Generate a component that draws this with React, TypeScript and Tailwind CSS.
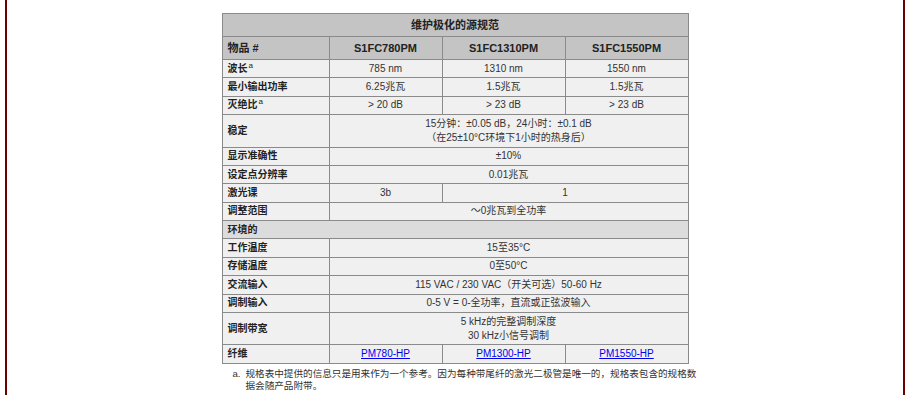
const rows: { label: string; sup?: boolean; cells: { text: string[]; span?: number }[] }[] = [
  { label: '波长', sup: true, cells: [{ text: ['785 nm'] }, { text: ['1310 nm'] }, { text: ['1550 nm'] }] },
  { label: '最小输出功率', cells: [{ text: ['6.25兆瓦'] }, { text: ['1.5兆瓦'] }, { text: ['1.5兆瓦'] }] },
  { label: '灭绝比', sup: true, cells: [{ text: ['> 20 dB'] }, { text: ['> 23 dB'] }, { text: ['> 23 dB'] }] },
  {
    label: '稳定',
    cells: [{ text: ['15分钟：±0.05 dB，24小时：±0.1 dB', '（在25±10°C环境下1小时的热身后）'], span: 3 }],
  },
  { label: '显示准确性', cells: [{ text: ['±10%'], span: 3 }] },
  { label: '设定点分辨率', cells: [{ text: ['0.01兆瓦'], span: 3 }] },
  { label: '激光课', cells: [{ text: ['3b'] }, { text: ['1'], span: 2 }] },
  { label: '调整范围', cells: [{ text: ['～0兆瓦到全功率'], span: 3 }] },
]

const envRows: { label: string; text: string[] }[] = [
  { label: '工作温度', text: ['15至35°C'] },
  { label: '存储温度', text: ['0至50°C'] },
  { label: '交流输入', text: ['115 VAC / 230 VAC（开关可选）50-60 Hz'] },
  { label: '调制输入', text: ['0-5 V = 0-全功率，直流或正弦波输入'] },
  { label: '调制带宽', text: ['5 kHz的完整调制深度', '30 kHz小信号调制'] },
]

const td = 'border border-[#8a8a8a] bg-[#f0f0f0] py-[1.7px] px-[5px] leading-[14px]'
const lbl = `${td} text-left font-bold text-[#222] text-[10px]`
const val = `${td} text-center text-[#333] text-[10px]`

export default function App() {
  return (
    <div className="ml-[5px] mr-[2px] h-[395px] border-x-2 border-[#6b0000] pt-[13px] font-['Liberation_Sans','Noto_Sans_CJK_SC',sans-serif]">
      <table className="mx-auto w-[467px] border-collapse">
        <colgroup>
          <col className="w-[107px]" />
          <col className="w-[113px]" />
          <col className="w-[123px]" />
          <col className="w-[123px]" />
        </colgroup>
        <tbody>
          <tr>
            <td colSpan={4} className="h-[23px] border border-[#8a8a8a] bg-[#c4c4c4] text-center text-[11px] font-bold text-[#222]">
              维护极化的源规范
            </td>
          </tr>
          <tr className="h-[23px] bg-[#c4c4c4] text-[11px] font-bold text-[#222]">
            <td className="border border-[#8a8a8a] px-[5px] text-left">物品 #</td>
            <td className="border border-[#8a8a8a] text-center">S1FC780PM</td>
            <td className="border border-[#8a8a8a] text-center">S1FC1310PM</td>
            <td className="border border-[#8a8a8a] text-center">S1FC1550PM</td>
          </tr>
          {rows.map((r) => (
            <tr key={r.label}>
              <td className={lbl}>
                {r.label}
                {r.sup && <sup className="ml-px text-[8px] font-normal">a</sup>}
              </td>
              {r.cells.map((c, i) => (
                <td key={i} colSpan={c.span ?? 1} className={val}>
                  {c.text.map((t) => (
                    <div key={t}>{t}</div>
                  ))}
                </td>
              ))}
            </tr>
          ))}
          <tr>
            <td colSpan={4} className="border border-[#8a8a8a] bg-[#dcdcdc] px-[5px] py-[1.7px] text-left text-[10px] leading-[14px] font-bold text-[#222]">
              环境的
            </td>
          </tr>
          {envRows.map((r) => (
            <tr key={r.label}>
              <td className={lbl}>{r.label}</td>
              <td colSpan={3} className={val}>
                {r.text.map((t) => (
                  <div key={t}>{t}</div>
                ))}
              </td>
            </tr>
          ))}
          <tr>
            <td className={lbl}>纤维</td>
            {['PM780-HP', 'PM1300-HP', 'PM1550-HP'].map((p) => (
              <td key={p} className={val}>
                <a href="#" className="text-[#0000ee] underline">
                  {p}
                </a>
              </td>
            ))}
          </tr>
        </tbody>
      </table>
      {/* footnote */}
      <div className="mx-auto mt-[4px] flex w-[467px] text-[9.6px] leading-[12px] text-[#333]">
        <span className="w-[24px] shrink-0 pl-[11px]">a.</span>
        <p className="shrink-0 whitespace-nowrap">
          规格表中提供的信息只是用来作为一个参考。因为每种带尾纤的激光二极管是唯一的，规格表包含的规格数
          <br />
          据会随产品附带。
        </p>
      </div>
    </div>
  )
}
